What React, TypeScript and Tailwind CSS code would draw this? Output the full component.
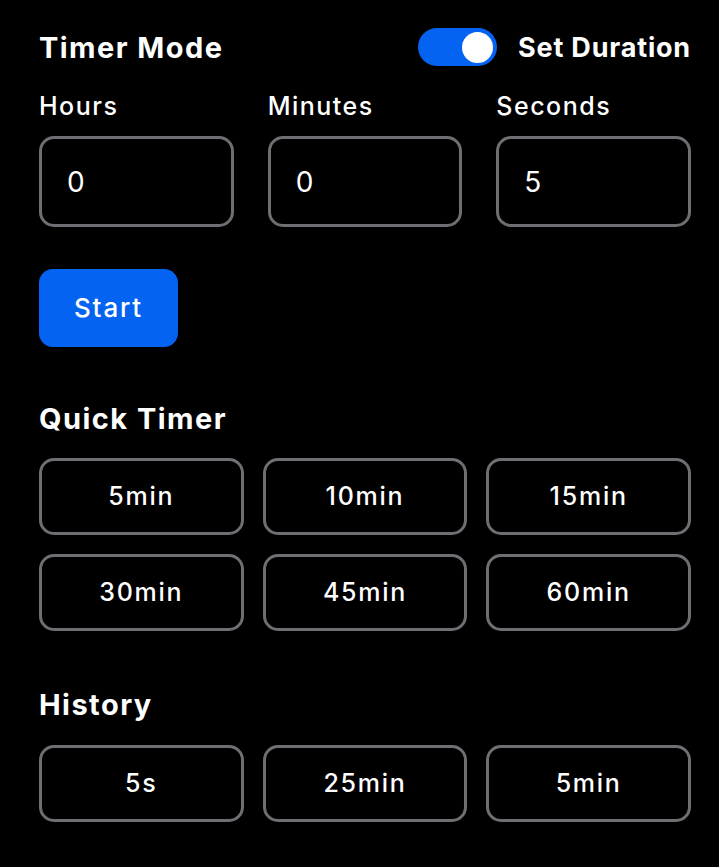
import { useState } from 'react';

const quickTimers = ['5min', '10min', '15min', '30min', '45min', '60min'];
const history = ['5s', '25min', '5min'];

function Toggle({ on, onChange }: { on: boolean; onChange: (v: boolean) => void }) {
  return (
    <button
      onClick={() => onChange(!on)}
      className={`flex h-[38px] w-[79px] items-center rounded-full px-[4px] ${on ? 'justify-end bg-[#0563f2]' : 'justify-start bg-[#3a3a3c]'}`}
    >
      <span className="h-[31px] w-[31px] rounded-full bg-white" />
    </button>
  );
}

function TimeField({ label, value }: { label: string; value: string }) {
  return (
    <div className="flex flex-col gap-[14px]">
      <span className="text-[25px] font-medium leading-[32px] tracking-[0.06em] text-white">{label}</span>
      <div className="flex h-[91px] items-center rounded-[15px] border-[3px] border-[#6f6f73] px-[25px] text-[28px] leading-none text-white">
        {value}
      </div>
    </div>
  );
}

function ChipButton({ label }: { label: string }) {
  return (
    <button className="h-[77px] rounded-[15px] border-[3px] border-[#6f6f73] text-[25px] font-medium leading-none tracking-[0.07em] text-white">
      {label}
    </button>
  );
}

export default function App() {
  const [durationMode, setDurationMode] = useState(true);

  return (
    <div
      className="min-h-[867px] w-full bg-black pl-[39px] pr-[28px] pt-[28px]"
      style={{ fontFamily: "Inter, 'Noto Sans', sans-serif" }}
    >
      {/* Mode header */}
      <div className="flex h-[38px] items-center justify-between">
        <h2 className="text-[29px] font-bold leading-none tracking-[0.05em] text-white">Timer Mode</h2>
        <div className="flex items-center gap-[21px]">
          <Toggle on={durationMode} onChange={setDurationMode} />
          <span className="text-[27px] font-bold leading-none tracking-[0.03em] text-white">Set Duration</span>
        </div>
      </div>

      {/* Duration inputs */}
      <div className="mt-[24px] grid grid-cols-3 gap-[34px]">
        <TimeField label="Hours" value="0" />
        <TimeField label="Minutes" value="0" />
        <TimeField label="Seconds" value="5" />
      </div>

      <button className="mt-[42px] h-[78px] w-[139px] rounded-[14px] bg-[#0563f2] text-[26px] font-medium leading-none tracking-[0.07em] text-white">
        Start
      </button>

      <h2 className="mt-[54px] text-[29px] font-bold leading-[36px] tracking-[0.05em] text-white">Quick Timer</h2>
      <div className="mt-[21px] grid grid-cols-3 gap-[19px]">
        {quickTimers.map(t => (
          <ChipButton key={t} label={t} />
        ))}
      </div>

      <h2 className="mt-[56px] text-[29px] font-bold leading-[36px] tracking-[0.05em] text-white">History</h2>
      <div className="mt-[22px] grid grid-cols-3 gap-[19px]">
        {history.map((t, i) => (
          <ChipButton key={i} label={t} />
        ))}
      </div>
    </div>
  );
}
